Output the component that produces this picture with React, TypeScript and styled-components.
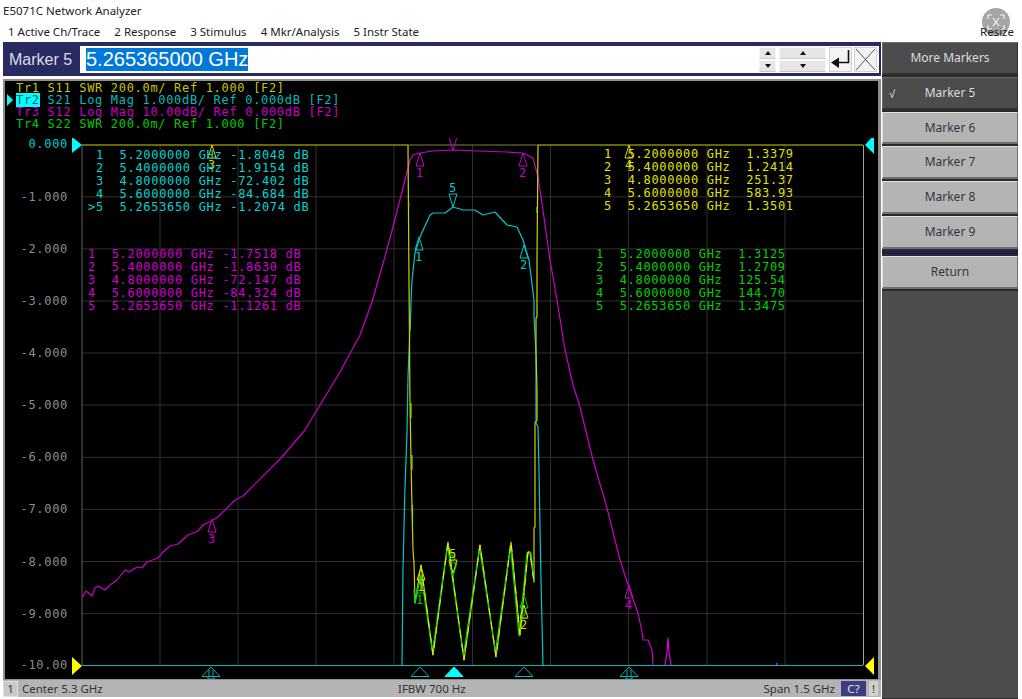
import React from "react";
import styled, { createGlobalStyle } from "styled-components";

type Point = [number, number];

const CYAN = "#00c8c8";
const MAGENTA = "#c800c8";
const YELLOW = "#d8d800";
const GREEN = "#00c800";

const GlobalStyle = createGlobalStyle`
  html, body {
    margin: 0;
    padding: 0;
    background: #fff;
  }
`;

const Page = styled.div`
  position: relative;
  display: flex;
  flex-direction: column;
  width: 1022px;
  height: 699px;
  overflow: hidden;
  background: #fff;
  font-family: "Noto Sans", sans-serif;
  color: #222;
`;

const TitleBar = styled.div`
  height: 21px;
  padding-left: 3px;
  font-size: 11.5px;
  line-height: 21px;
`;

const MenuBar = styled.div`
  display: flex;
  gap: 14px;
  height: 21px;
  padding-left: 8px;
  font-size: 11.5px;
  line-height: 21px;
`;

const ResizeBadge = styled.div`
  position: absolute;
  top: 8px;
  left: 982px;
  display: flex;
  align-items: center;
  justify-content: center;
  width: 28px;
  height: 28px;
  border-radius: 50%;
  background: #a6a6a6;
`;

const ResizeLabel = styled.div`
  position: absolute;
  top: 23px;
  left: 980px;
  font-size: 11.5px;
  line-height: 17px;
  color: #222;
`;

const Workspace = styled.div`
  display: flex;
  flex: 1;
  gap: 1px;
  padding-left: 3px;
  min-height: 0;
`;

const LeftColumn = styled.div`
  display: flex;
  flex-direction: column;
  width: 878px;
`;

const EntryBar = styled.div`
  display: flex;
  height: 34px;
  box-sizing: border-box;
  padding: 4px 2px 3px 0;
  background: #2a2a62;
`;

const EntryLabel = styled.div`
  width: 77px;
  padding-left: 6px;
  box-sizing: border-box;
  font-family: "Liberation Sans", sans-serif;
  font-size: 16px;
  line-height: 27px;
  color: #dcdce6;
`;

const EntryField = styled.div`
  display: flex;
  flex: 1;
  align-items: center;
  padding-left: 6px;
  background: #fff;
`;

const Selection = styled.span`
  font-family: "Liberation Sans", sans-serif;
  font-size: 20px;
  line-height: 23px;
  color: #fff;
  background: #0078d7;
`;

const EntryControls = styled.div`
  display: flex;
  align-items: center;
  gap: 2px;
  margin-left: auto;
  padding-right: 2px;
`;

const SpinColumn = styled.div<{ $width: number }>`
  display: flex;
  flex-direction: column;
  gap: 1px;
  width: ${({ $width }) => $width}px;
  margin-right: 1px;
`;

const SpinButton = styled.div`
  display: flex;
  align-items: center;
  justify-content: center;
  height: 12px;
  background: #e6e6e6;
  border: 1px solid #f4f4f4;
  border-bottom-color: #c8c8c8;
  box-sizing: border-box;
`;

const SpinArrow = styled.span<{ $up?: boolean }>`
  width: 0;
  height: 0;
  border-left: 3px solid transparent;
  border-right: 3px solid transparent;
  border-${({ $up }) => ($up ? "bottom" : "top")}: 4px solid #111;
`;

const IconButton = styled.div`
  display: flex;
  width: 23px;
  height: 25px;
  background: #f3f3f3;
  border: 1px solid #d0d0d0;
  box-sizing: border-box;
`;

const AnalyzerPanel = styled.div`
  position: relative;
  display: flex;
  flex-direction: column;
  height: 601px;
  margin-top: 3px;
  box-sizing: border-box;
  border: 2px solid #8e8e8e;
  border-right-width: 3px;
  border-bottom-width: 1px;
  background: #000;
  font-family: "DejaVu Sans Mono", monospace;
  font-size: 12px;
  letter-spacing: 0.68px;
  white-space: pre;
`;

const TraceHeader = styled.div`
  height: 57px;
  padding: 1px 0 0 11px;
  box-sizing: border-box;
`;

const TraceRow = styled.div<{ $color: string }>`
  position: relative;
  height: 12px;
  line-height: 12px;
  color: ${({ $color }) => $color};
`;

const ActiveTag = styled.span`
  background: #00ffff;
  color: #00606a;
`;

const ActiveArrow = styled.span`
  position: absolute;
  top: 0;
  left: -9px;
  width: 0;
  height: 0;
  border-top: 6px solid transparent;
  border-bottom: 6px solid transparent;
  border-left: 6px solid #00ffff;
`;

const ChartSvg = styled.svg`
  display: block;
  width: 872px;
  height: 541px;
`;

const MarkerTable = styled.div<{ $left: number; $top: number; $color: string }>`
  position: absolute;
  left: ${({ $left }) => $left - 5}px;
  top: ${({ $top }) => $top - 81}px;
  line-height: 13px;
  color: ${({ $color }) => $color};
`;

const StatusBar = styled.div`
  display: flex;
  align-items: center;
  height: 17px;
  background: #b4b4b4;
  font-size: 11.5px;
  color: #333;
`;

const ChannelBox = styled.div`
  width: 15px;
  height: 16px;
  margin-right: 4px;
  box-sizing: border-box;
  border: 1px solid #e0e0e0;
  background: #c8c8c8;
  text-align: center;
  line-height: 14px;
`;

const StatusLeft = styled.div`
  width: 376px;
`;

const StatusRight = styled.div`
  display: flex;
  align-items: center;
  margin-left: auto;
`;

const HelpBox = styled.div`
  width: 25px;
  height: 15px;
  margin: 0 3px 0 6px;
  background: #3c3c80;
  color: #e4e4f0;
  text-align: center;
  line-height: 15px;
`;

const AlertBox = styled.div`
  width: 9px;
  height: 15px;
  margin-right: 3px;
  background: #d0d0d0;
  text-align: center;
  line-height: 15px;
`;

const SoftkeyColumn = styled.div`
  display: flex;
  flex-direction: column;
  gap: 2px;
  width: 136px;
  background: #2a2a2a;
  font-size: 12px;
`;

const Softkey = styled.div<{ $active?: boolean }>`
  position: relative;
  height: 32.8px;
  box-sizing: border-box;
  border-top: 1px solid ${({ $active }) => ($active ? "#6c6c6c" : "#e0e0e0")};
  border-left: 1px solid ${({ $active }) => ($active ? "#6c6c6c" : "#e0e0e0")};
  border-bottom: 2px solid ${({ $active }) => ($active ? "#303030" : "#6e6e6e")};
  border-right: 1px solid ${({ $active }) => ($active ? "#303030" : "#6e6e6e")};
  background: ${({ $active }) => ($active ? "#4c4c4c" : "#b4b4b4")};
  color: ${({ $active }) => ($active ? "#dcdce0" : "#34343e")};
  text-align: center;
  line-height: 30px;
`;

const CheckMark = styled.span`
  position: absolute;
  left: 6px;
  top: 1px;
  font-size: 11px;
  color: #eee;
`;

const Separator = styled.div`
  height: 3px;
  margin-bottom: 0;
  background: #1c1c5a;
`;

const SoftkeyFill = styled.div`
  flex: 1;
  background: #4c4c4c;
  margin-bottom: 1px;
`;

const MAGENTA_TRACE: Point[] = [
  [82, 598], [86, 591], [92, 596], [95, 588], [98, 586], [105, 590], [110, 585], [117, 580],
  [125, 570], [129, 572], [137, 567], [142, 568], [147, 562], [158, 558], [163, 552], [170, 546],
  [178, 544], [188, 535], [198, 531], [203, 525], [213, 520], [218, 517], [223, 512], [235, 500],
  [243, 496], [282, 457], [305, 430], [320, 405], [340, 372], [360, 335], [372, 302], [384, 260],
  [393, 227], [407, 172], [410, 160], [413, 155], [420, 153], [433, 151], [453, 150], [477, 151],
  [507, 152], [523, 153], [533, 158], [538, 177], [543, 210], [550, 260], [557, 300], [565, 350],
  [573, 385], [580, 407], [593, 460], [607, 508], [620, 560], [628, 585], [638, 613], [642, 632],
  [643, 640], [648, 640], [652, 650], [653, 665],
];

const MAGENTA_SPIKE: Point[] = [[665, 665], [667, 652], [668, 638], [669, 652], [671, 665]];

const CYAN_TRACE: Point[] = [
  [402, 665], [403, 570], [404, 527], [405, 487], [407, 433], [408, 377], [410, 327], [412, 280],
  [415, 253], [420, 237], [430, 215], [433, 213], [445, 213], [453, 207], [463, 210], [475, 210],
  [483, 215], [495, 212], [507, 225], [517, 227], [523, 240], [529, 260], [534, 300], [534, 317],
  [536, 353], [536, 423], [538, 427], [539, 470], [540, 527], [541, 580], [543, 665],
];

const YELLOW_TRACE: Point[] = [
  [408, 145], [409, 280], [410, 403], [411, 460], [412, 507], [413, 550], [414, 563], [415, 603],
  [421, 565], [433, 655], [448, 542], [464, 660], [480, 545], [496, 657], [511, 542], [520, 635],
  [528, 552], [530, 552], [534, 582], [534, 528], [535, 527], [535, 423], [537, 420], [537, 390],
  [536, 353], [536, 318], [537, 317], [537, 260], [538, 145],
];

const GREEN_TRACE: Point[] = [
  [414, 590], [415, 603], [421, 575], [432.5, 652], [447.5, 545], [463.5, 655], [479.5, 548],
  [495.5, 652], [510.5, 546], [519, 636], [527, 553], [531, 553], [534, 582],
];

const GREEN_BITS: Point[][] = [
  [[408.7, 203], [408.7, 207]],
  [[537, 207], [537, 213]],
  [[410, 318], [410, 330]],
  [[411, 403], [411, 418]],
  [[412, 455], [412, 470]],
  [[412.5, 505], [412.5, 523]],
];

const GRID_X = [160, 238, 316, 394, 472.5, 550.5, 628.5, 707, 785];
const GRID_Y = [196.8, 248.9, 301, 353, 405, 457.3, 509.4, 561.5, 613.6];
const AXIS_LABELS = ["-1.000", "-2.000", "-3.000", "-4.000", "-5.000", "-6.000", "-7.000", "-8.000", "-9.000"];

const UP_MARKERS = [
  { x: 212, y: 145, label: "3", color: YELLOW },
  { x: 629, y: 145, label: "4", color: YELLOW },
  { x: 420, y: 153, label: "1", color: MAGENTA },
  { x: 523, y: 153, label: "2", color: MAGENTA },
  { x: 212, y: 519, label: "3", color: MAGENTA },
  { x: 629, y: 585, label: "4", color: MAGENTA },
  { x: 419, y: 237, label: "1", color: CYAN },
  { x: 524, y: 245, label: "2", color: CYAN },
  { x: 420, y: 580, label: "1", color: GREEN },
  { x: 524, y: 595, label: "2", color: GREEN },
  { x: 421, y: 567, label: "1", color: YELLOW },
  { x: 524, y: 605, label: "2", color: YELLOW },
];

const DOWN_MARKERS = [
  { x: 453, y: 150, label: "5", color: MAGENTA },
  { x: 453, y: 207, label: "5", color: CYAN },
  { x: 453, y: 576, label: "5", color: GREEN },
  { x: 453, y: 573, label: "5", color: YELLOW },
];

const TRACE_ROWS = [
  { color: "#c4c400", tag: "Tr1", rest: " S11 SWR 200.0m/ Ref 1.000 [F2]" },
  { color: "#00bcbc", tag: "Tr2", rest: " S21 Log Mag 1.000dB/ Ref 0.000dB [F2]", active: true },
  { color: MAGENTA, tag: "Tr3", rest: " S12 Log Mag 10.00dB/ Ref 0.000dB [F2]" },
  { color: GREEN, tag: "Tr4", rest: " S22 SWR 200.0m/ Ref 1.000 [F2]" },
];

const MARKER_TABLES = [
  {
    left: 88, top: 149, color: "#00d4d4",
    rows: [
      " 1  5.2000000 GHz -1.8048 dB",
      " 2  5.4000000 GHz -1.9154 dB",
      " 3  4.8000000 GHz -72.402 dB",
      " 4  5.6000000 GHz -84.684 dB",
      ">5  5.2653650 GHz -1.2074 dB",
    ],
  },
  {
    left: 88, top: 248, color: "#d000d0",
    rows: [
      "1  5.2000000 GHz -1.7518 dB",
      "2  5.4000000 GHz -1.8630 dB",
      "3  4.8000000 GHz -72.147 dB",
      "4  5.6000000 GHz -84.324 dB",
      "5  5.2653650 GHz -1.1261 dB",
    ],
  },
  {
    left: 604, top: 148, color: "#e0e000",
    rows: [
      "1  5.2000000 GHz  1.3379",
      "2  5.4000000 GHz  1.2414",
      "3  4.8000000 GHz  251.37",
      "4  5.6000000 GHz  583.93",
      "5  5.2653650 GHz  1.3501",
    ],
  },
  {
    left: 596, top: 248, color: "#00d000",
    rows: [
      "1  5.2000000 GHz  1.3125",
      "2  5.4000000 GHz  1.2709",
      "3  4.8000000 GHz  125.54",
      "4  5.6000000 GHz  144.70",
      "5  5.2653650 GHz  1.3475",
    ],
  },
];

const toPoints = (trace: Point[]) => trace.map(([x, y]) => `${x},${y}`).join(" ");

const Trace = ({ points, color }: { points: Point[]; color: string }) => (
  <polyline points={toPoints(points)} fill="none" stroke={color} strokeWidth={1.2} strokeLinejoin="round" />
);

const AxisText = ({ y, color, children }: { y: number; color: string; children: string }) => (
  <text x={68} y={y + 4} textAnchor="end" fill={color} fontSize={12} letterSpacing={0.68} fontFamily="DejaVu Sans Mono, monospace">
    {children}
  </text>
);

const MarkerUp = ({ x, y, label, color }: { x: number; y: number; label: string; color: string }) => (
  <g stroke={color} fill="none" strokeWidth={1}>
    <polygon points={`${x},${y} ${x - 4},${y + 13} ${x + 4},${y + 13}`} />
    <text x={x} y={y + 24} textAnchor="middle" fill={color} stroke="none" fontSize={12} fontFamily="DejaVu Sans Mono, monospace">
      {label}
    </text>
  </g>
);

const MarkerDown = ({ x, y, label, color }: { x: number; y: number; label: string; color: string }) => (
  <g stroke={color} fill="none" strokeWidth={1}>
    <polygon points={`${x},${y} ${x - 4},${y - 13} ${x + 4},${y - 13}`} />
    <text x={x} y={y - 15} textAnchor="middle" fill={color} stroke="none" fontSize={12} fontFamily="DejaVu Sans Mono, monospace">
      {label}
    </text>
  </g>
);

const StimulusMark = ({ x, filled, inner }: { x: number; filled?: boolean; inner?: boolean }) => (
  <g stroke={filled ? "#00ffff" : "#00b4b4"} fill={filled ? "#00ffff" : "none"} strokeWidth={1}>
    <polygon points={`${x},667 ${x - 9},676.5 ${x + 9},676.5`} />
    {inner && <path d={`M${x - 2} 670V676.5M${x + 2} 670V676.5M${x - 3} 676.5V679H${x + 3}V676.5`} />}
  </g>
);

const Chart = () => (
  <ChartSvg viewBox="5 138 872 541">
    {GRID_X.map((x) => (
      <line key={x} x1={x} x2={x} y1={145} y2={665} stroke="#303030" />
    ))}
    {GRID_Y.map((y) => (
      <line key={y} x1={82} x2={863} y1={y} y2={y} stroke="#303030" />
    ))}
    <line x1={82} x2={82} y1={145} y2={665} stroke="#5e5e5e" />
    <line x1={863.5} x2={863.5} y1={145} y2={665} stroke="#a0a0a0" />

    <AxisText y={144} color={CYAN}>0.000</AxisText>
    {GRID_Y.map((y, i) => (
      <AxisText key={y} y={y} color="#8c8c8c">{AXIS_LABELS[i]}</AxisText>
    ))}
    <AxisText y={665} color="#8c8c8c">-10.00</AxisText>

    <line x1={82} x2={408} y1={145} y2={145} stroke="#d0d000" />
    <line x1={408} x2={538} y1={145} y2={145} stroke="#808040" />
    <line x1={538} x2={863} y1={145} y2={145} stroke="#d0d000" />
    <line x1={82} x2={863} y1={665.5} y2={665.5} stroke="#00b8b8" />

    <Trace points={MAGENTA_TRACE} color="#c800c8" />
    <Trace points={MAGENTA_SPIKE} color="#e000e0" />
    <line x1={777} x2={777} y1={663} y2={665} stroke="#c800c8" strokeWidth={2} />
    <Trace points={CYAN_TRACE} color="#00c8c8" />
    <Trace points={YELLOW_TRACE} color="#d0d000" />
    <Trace points={GREEN_TRACE} color="#00e000" />
    {GREEN_BITS.map((bit, i) => (
      <Trace key={i} points={bit} color="#80e000" />
    ))}
    <polyline points={toPoints(YELLOW_TRACE.slice(8, 19))} fill="none" stroke="#f0f000" strokeWidth={1} strokeDasharray="7 7" />

    {UP_MARKERS.map((marker, i) => (
      <MarkerUp key={i} {...marker} />
    ))}
    {DOWN_MARKERS.map((marker, i) => (
      <MarkerDown key={i} {...marker} />
    ))}

    <polygon points="72,137 82,145 72,153" fill="#00ffff" />
    <polygon points="72,657 82,666 72,675" fill="#ffff00" />
    <polygon points="874,135 865,145 874,154" fill="#00ffff" />
    <polygon points="874,657 865,666 874,675" fill="#ffff00" />

    <StimulusMark x={211} inner />
    <StimulusMark x={420} />
    <StimulusMark x={454} filled />
    <StimulusMark x={524} />
    <StimulusMark x={629} inner />
  </ChartSvg>
);

const App = () => (
  <Page>
    <GlobalStyle />
    <TitleBar>E5071C Network Analyzer</TitleBar>
    <MenuBar>
      <span>1 Active Ch/Trace</span>
      <span>2 Response</span>
      <span>3 Stimulus</span>
      <span>4 Mkr/Analysis</span>
      <span>5 Instr State</span>
    </MenuBar>
    <ResizeBadge>
      <svg width="18" height="16" viewBox="0 0 18 16" fill="none" stroke="#f4f4f4" strokeWidth="1.2">
        <path d="M1 5V1H5M13 1H17V5M17 11V15H13M5 15H1V11" />
        <path d="M6 4L12 12M12 4L6 12" />
      </svg>
    </ResizeBadge>
    <ResizeLabel>Resize</ResizeLabel>
    <Workspace>
      <LeftColumn>
        <EntryBar>
          <EntryLabel>Marker 5</EntryLabel>
          <EntryField>
            <Selection>5.265365000 GHz</Selection>
            <EntryControls>
              <SpinColumn $width={17}>
                <SpinButton><SpinArrow $up /></SpinButton>
                <SpinButton><SpinArrow /></SpinButton>
              </SpinColumn>
              <SpinColumn $width={47}>
                <SpinButton><SpinArrow $up /></SpinButton>
                <SpinButton><SpinArrow /></SpinButton>
              </SpinColumn>
              <IconButton>
                <svg width="21" height="23" viewBox="0 0 21 23">
                  <path d="M18.5 2V14.5H8" fill="none" stroke="#111" strokeWidth="1.6" />
                  <polygon points="1,14.5 9,9.5 9,20" fill="#111" />
                </svg>
              </IconButton>
              <IconButton>
                <svg width="21" height="23" viewBox="0 0 21 23">
                  <path d="M1 1L20 22M20 1L1 22" fill="none" stroke="#555" strokeWidth="1" />
                </svg>
              </IconButton>
            </EntryControls>
          </EntryField>
        </EntryBar>
        <AnalyzerPanel>
          <TraceHeader>
            {TRACE_ROWS.map((row) => (
              <TraceRow key={row.tag} $color={row.color}>
                {row.active && <ActiveArrow />}
                {row.active ? <ActiveTag>{row.tag}</ActiveTag> : row.tag}
                {row.rest}
              </TraceRow>
            ))}
          </TraceHeader>
          <Chart />
          {MARKER_TABLES.map((table) => (
            <MarkerTable key={table.color} $left={table.left} $top={table.top} $color={table.color}>
              {table.rows.map((row) => (
                <div key={row}>{row}</div>
              ))}
            </MarkerTable>
          ))}
        </AnalyzerPanel>
        <StatusBar>
          <ChannelBox>1</ChannelBox>
          <StatusLeft>Center 5.3 GHz</StatusLeft>
          <span>IFBW 700 Hz</span>
          <StatusRight>
            <span>Span 1.5 GHz</span>
            <HelpBox>C?</HelpBox>
            <AlertBox>!</AlertBox>
          </StatusRight>
        </StatusBar>
      </LeftColumn>
      <SoftkeyColumn>
        <Softkey $active>More Markers</Softkey>
        <Softkey $active>
          <CheckMark>√</CheckMark>
          Marker 5
        </Softkey>
        <Softkey>Marker 6</Softkey>
        <Softkey>Marker 7</Softkey>
        <Softkey>Marker 8</Softkey>
        <Softkey>Marker 9</Softkey>
        <Separator />
        <Softkey>Return</Softkey>
        <SoftkeyFill />
      </SoftkeyColumn>
    </Workspace>
  </Page>
);

export default App;
